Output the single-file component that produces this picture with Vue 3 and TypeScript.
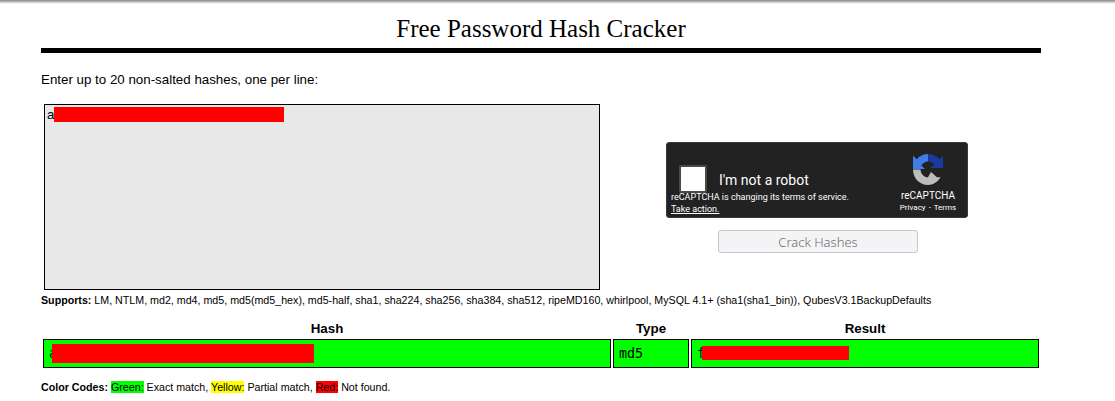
<template>
  <div class="page">
    <div class="wrap">
      <h1 class="title">Free Password Hash Cracker</h1>
      <div class="rule"></div>
      <p class="intro">Enter up to 20 non-salted hashes, one per line:</p>

      <div class="form-row">
        <div class="input-box">
          a
          <span class="redact input-redact"></span>
        </div>
        <div class="side">
          <div class="captcha">
            <div class="captcha-main">
              <div class="check-row">
                <div class="check"></div>
                <span class="robot">I'm not a robot</span>
              </div>
              <div class="terms">reCAPTCHA is changing its terms of service.</div>
              <a class="action">Take action.</a>
            </div>
            <div class="brand">
              <svg class="logo" viewBox="0 0 32 32" width="32" height="33">
                <path fill="#bdbdbd" d="M1 16h7.500c.2 4.400 3.500 7.800 7.500 7.800l3-5.300 6 5.300h3.500c-2.800 4.600-7.200 7.700-12.500 7.700C7.500 31.500 1 24.500 1 16z" />
                <path fill="#3f7ee8" d="M16 .5V8c-3 0-5.400 1.700-6.600 4l3.600 3.500H1V2l3.700 3.800C7.500 2.500 11.500.5 16 .5z" />
                <path fill="#1a3a9e" d="M16 .5c4.500 0 8.500 2 11.300 5.300L31 2v12.400H18.500l3.600-3.400C20.700 9.200 18.500 8 16 8z" />
              </svg>
              <div class="brand-name">reCAPTCHA</div>
              <div class="brand-links">Privacy - Terms</div>
            </div>
          </div>
          <button class="crack" disabled>Crack Hashes</button>
        </div>
      </div>

      <p class="supports">
        <b>Supports:</b> LM, NTLM, md2, md4, md5, md5(md5_hex), md5-half, sha1, sha224, sha256, sha384, sha512, ripeMD160, whirlpool, MySQL 4.1+ (sha1(sha1_bin)), QubesV3.1BackupDefaults
      </p>

      <table class="results">
        <thead>
          <tr>
            <th class="col-hash">Hash</th>
            <th class="col-type">Type</th>
            <th>Result</th>
          </tr>
        </thead>
        <tbody>
          <tr>
            <td class="cell">
              a
              <span class="redact hash-redact"></span>
            </td>
            <td class="cell">md5</td>
            <td class="cell">
              f
              <span class="redact result-redact"></span>
            </td>
          </tr>
        </tbody>
      </table>

      <p class="codes">
        <b>Color Codes:</b> <span class="green">Green:</span> Exact match, <span class="yellow">Yellow:</span> Partial match, <span class="red">Red:</span> Not found.
      </p>
    </div>
  </div>
</template>

<script setup lang="ts">
</script>

<style>
html,
body {
  margin: 0;
  background: #fff;
}
</style>

<style scoped>
.page {
  height: 401px;
  box-sizing: border-box;
  padding: 0 0 0 41px;
  overflow: hidden;
  background: linear-gradient(#8a8a8a 0, #a0a0a0 1px, #c4c4c4 2px, #e8e8e8 3px, #fff 4px) no-repeat;
  font-family: "Liberation Sans", Arial, sans-serif;
  color: #000;
}

.wrap {
  width: 1000px;
}

.title {
  margin: 0;
  padding-top: 14px;
  height: 34px;
  text-align: center;
  font: 400 25px/30px "Liberation Serif", serif;
}

.rule {
  height: 5px;
  background: #000;
}

.intro {
  margin: 19px 0 0;
  font-size: 13.33px;
  line-height: 16px;
}

.form-row {
  display: flex;
  margin-top: 16px;
  padding-left: 3px;
}

.input-box {
  position: relative;
  width: 556px;
  height: 186px;
  box-sizing: border-box;
  border: 1px solid #000;
  background: #e8e8e8;
  padding: 2px;
  font-size: 13.33px;
  line-height: 16px;
}

.redact {
  position: absolute;
  background: #f00;
}

.input-redact {
  left: 9px;
  top: 2px;
  width: 230px;
  height: 15px;
}

.side {
  width: 302px;
  margin-left: 66px;
  padding-top: 38px;
  display: flex;
  flex-direction: column;
  align-items: center;
}

.captcha {
  width: 302px;
  height: 76px;
  box-sizing: border-box;
  display: flex;
  justify-content: space-between;
  background: #222;
  border: 1px solid #3a3a3a;
  border-radius: 3px;
  font-family: Roboto, sans-serif;
  color: #fff;
}

.captcha-main {
  padding: 22px 0 0 4px;
}

.check-row {
  display: flex;
  align-items: center;
  gap: 12px;
  margin-left: 8px;
  height: 28px;
}

.check {
  width: 24px;
  height: 24px;
  background: #fff;
  border: 2px solid #4a4a4a;
  border-radius: 2px;
}

.robot {
  padding-top: 2px;
  font-size: 14px;
}

.terms {
  margin-top: -1px;
  font-size: 9px;
  line-height: 11px;
}

.action {
  display: block;
  width: max-content;
  margin-top: 1px;
  font-size: 9px;
  line-height: 11px;
  text-decoration: underline;
}

.brand {
  width: 78px;
  padding-top: 10px;
  display: flex;
  flex-direction: column;
  align-items: center;
}

.logo {
  display: block;
}

.brand-name {
  margin-top: 3px;
  font-size: 10px;
  line-height: 13px;
}

.brand-links {
  margin-top: 1px;
  font-size: 8px;
  line-height: 10px;
  word-spacing: 1px;
}

.crack {
  margin-top: 12px;
  margin-left: 2px;
  width: 200px;
  height: 23px;
  box-sizing: border-box;
  padding: 1px 0 0;
  border: 1px solid #c8c8cc;
  border-radius: 3px;
  background: #f4f4f6;
  color: #6e6e6e;
  font: 300 13px/20px "Noto Sans", sans-serif;
}

.supports {
  margin: 3px 0 0;
  font-size: 10.68px;
  line-height: 14px;
  white-space: nowrap;
}

.results {
  width: 1000px;
  margin-top: 11px;
  border-collapse: separate;
  border-spacing: 2px;
  table-layout: fixed;
}

.results th {
  padding: 0 0 1px;
  height: 16px;
  font-size: 13.33px;
  line-height: 15px;
}

.col-hash {
  width: 568px;
}

.col-type {
  width: 76px;
}

.cell {
  position: relative;
  height: 27px;
  padding: 0 0 0 5px;
  border: 1px solid #000;
  background: #0f0;
  font: 13.33px/27px "DejaVu Sans Mono", monospace;
  overflow: hidden;
}

.hash-redact {
  left: 8px;
  top: 4px;
  width: 262px;
  height: 19px;
}

.result-redact {
  left: 10px;
  top: 6px;
  width: 147px;
  height: 14px;
}

.codes {
  margin: 10px 0 0;
  font-size: 10.68px;
  line-height: 14px;
}

.green {
  background: #0f0;
}

.yellow {
  background: #ff0;
}

.red {
  background: #f00;
}
</style>
